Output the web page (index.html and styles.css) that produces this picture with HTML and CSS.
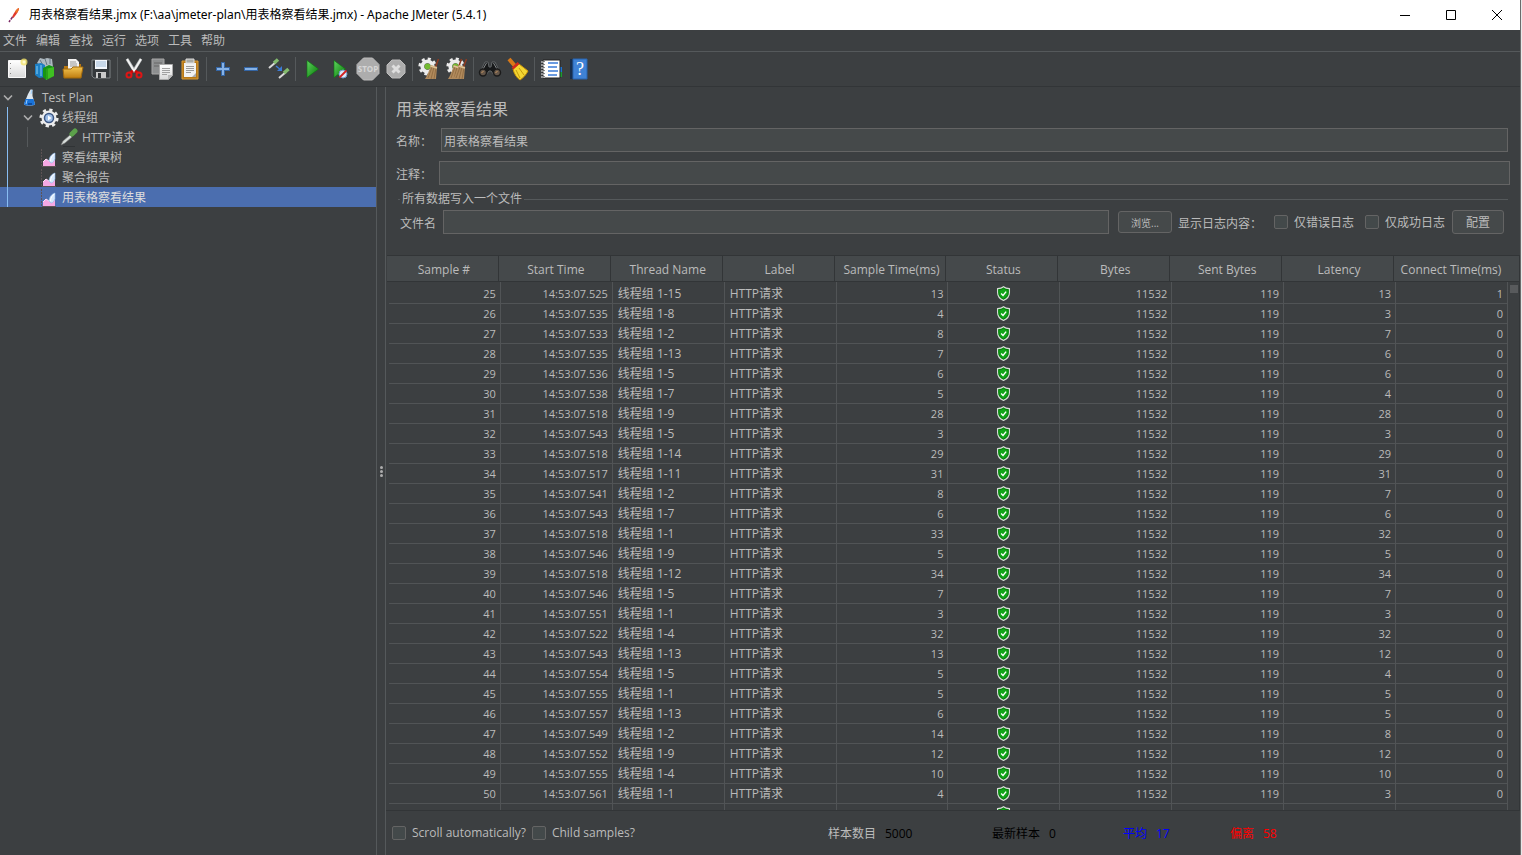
FILE: index.html
```html
<!DOCTYPE html>
<html lang="zh-CN">
<head>
  <meta charset="UTF-8">
  <title>用表格察看结果.jmx - Apache JMeter (5.4.1)</title>
  <link rel="stylesheet" href="styles.css">
</head>
<body>
  <svg class="defs" aria-hidden="true">
    <defs>
      <linearGradient id="gPaper" x1="0" y1="0" x2="0" y2="1"><stop offset="0" stop-color="#fff"/><stop offset="1" stop-color="#d9d9d9"/></linearGradient>
      <linearGradient id="gGreen" x1="0" y1="0" x2="1" y2="1"><stop offset="0" stop-color="#5fd35f"/><stop offset="1" stop-color="#067806"/></linearGradient>
      <linearGradient id="gGold" x1="0" y1="0" x2="0" y2="1"><stop offset="0" stop-color="#f3c552"/><stop offset="1" stop-color="#bf7d10"/></linearGradient>
    </defs>
    <symbol id="shield" viewBox="0 0 16 16">
      <path d="M8 .8C6.500 2.200 4.500 2.800 1.700 2.900V7c0 3.900 2.600 6.900 6.300 8.300 3.700-1.400 6.300-4.400 6.300-8.300V2.900C11.500 2.800 9.500 2.200 8 .8z" fill="#0a9a10" stroke="#d6dad6" stroke-width="1.300"/>
      <path d="M8 2.300C6.700 3.400 5 3.900 3 4V7c0 3 2 5.600 5 6.900 3-1.300 5-3.900 5-6.900V4C11 3.900 9.300 3.400 8 2.300z" fill="#12a418" stroke="#07650b" stroke-width=".6"/>
      <path d="M5.500 8l2 2 3.300-4" fill="none" stroke="#fff" stroke-width="1.500"/>
    </symbol>
    <symbol id="chart" viewBox="0 0 22 20">
      <path d="M3.500 1v17" stroke="#5d5355" stroke-dasharray="2 1"/>
      <path d="M5 18v-4l3-3 3 2 3 1 3-3v7z" fill="#f6a8e4"/>
      <path d="M5 14l3-3 3 2 3 1" fill="none" stroke="#fde3f7"/>
      <path d="M17 5c-4 1-6 5-6 8l2 2c2 0 3-2 4-4z" fill="#d6e8fd" stroke="#8db7ea" stroke-width=".6"/>
      <path d="M16.500 6c-2 1-4 4-4 7" fill="none" stroke="#fff"/>
      <path d="M4 18.500h14" stroke="#5d5355"/>
    </symbol>
    <symbol id="chevron" viewBox="0 0 16 16">
      <path d="M4 5.500l4 4 4-4" fill="none" stroke="#adadad" stroke-width="1.600"/>
    </symbol>
    <symbol id="broom" viewBox="0 0 24 24">
      <path d="M21.500 2l-3 8" stroke="#8f3c22" stroke-width="1.500"/>
      <path d="M14 8l6 2-1 12H8c2-3 4-8 6-14z" fill="#b18a5c"/>
      <path d="M15 10l-4 11M17 10l-3 12M19 11l-2 11" stroke="#8b683f" stroke-width=".8"/>
      <path d="M13.500 9l6.500 2" stroke="#dfc396" stroke-width="1.500"/>
    </symbol>
    <symbol id="cog" viewBox="0 0 24 24">
      <circle cx="12" cy="12" r="9.500" fill="none" stroke="#ececec" stroke-width="4" stroke-dasharray="3.730 3.730"/>
      <circle cx="12" cy="12" r="6.500" fill="none" stroke="#ececec" stroke-width="5"/>
    </symbol>
  </svg>

  <div class="window">
    <header class="titlebar">
      <svg class="app-icon" viewBox="0 0 16 16"><path d="M13 1c-3 1-5 5-7 9l1.500 1C10 8 13 4 13 1z" fill="#e13a2e"/><path d="M13 1c-2 .5-3 2-4 4l2 1c1-2 2-3 2-5z" fill="#ec7427"/><path d="M6.500 10L3 15" stroke="#7c2a66" stroke-width="1.500" stroke-dasharray="3 1"/></svg>
      <h1>用表格察看结果.jmx (F:\aa\jmeter-plan\用表格察看结果.jmx) - Apache JMeter (5.4.1)</h1>
      <div class="window-controls">
        <button aria-label="Minimize"><svg viewBox="0 0 12 12"><path d="M1 6.500h10"/></svg></button>
        <button aria-label="Maximize"><svg viewBox="0 0 12 12"><path d="M1.500 1.500h9v9h-9z"/></svg></button>
        <button aria-label="Close"><svg viewBox="0 0 12 12"><path d="M1 1l10 10M11 1L1 11"/></svg></button>
      </div>
    </header>

    <nav class="menubar">
      <button>文件</button>
      <button>编辑</button>
      <button>查找</button>
      <button>运行</button>
      <button>选项</button>
      <button>工具</button>
      <button>帮助</button>
    </nav>

    <div class="toolbar" role="toolbar">
      <button aria-label="New"><svg viewBox="0 0 24 24"><path d="M3.500 3.500h17v17h-17z" fill="url(#gPaper)" stroke="#f8f8f8"/><path d="M5.500 6v12" stroke="#888" stroke-dasharray="1 4"/><circle cx="19" cy="5" r="3.500" fill="#f3e46b" opacity=".8"/><circle cx="19" cy="5" r="1.500" fill="#fffbd0"/></svg></button>
      <button aria-label="Templates"><svg viewBox="0 0 24 24"><path d="M4 6l3-5 4 1 3-1 5 1 1 8-8 2z" fill="#aeb9c0"/><path d="M7 3l3 5M12 2l2 6M17 2v5" stroke="#687883"/><path d="M2 7l6-1 4 2v12l-6 1-4-3z" fill="#1c7fc4"/><path d="M4 9v8M8 8v11" stroke="#8bd0f4"/><path d="M10 11l6-3 5 2v9l-8 4-3-3z" fill="#179514"/><path d="M13 12l8-2v9l-8 4z" fill="#3fbf22"/><path d="M14 12v10" stroke="#178312"/></svg></button>
      <button aria-label="Open"><svg viewBox="0 0 24 24"><path d="M3 9h5l2-2h10v12H3z" fill="#b87710"/><path d="M7 2h8l3 3v10H7z" fill="#f2f2f2"/><path d="M9 5h6M9 7h7M9 9h7" stroke="#999"/><path d="M2 12h8l2-2h10l-2 11H3z" fill="url(#gGold)" stroke="#a36b0d"/></svg></button>
      <button aria-label="Save"><svg viewBox="0 0 24 24"><path d="M3 3h18v18H5l-2-2z" fill="#34383b" stroke="#7d8184"/><path d="M6 3h12v9H6z" fill="#f2f6fb"/><path d="M7 5h10M7 7h10M7 9h10" stroke="#9cb9d6"/><path d="M7 15h10v6H7z" fill="#c9c9c9"/><path d="M9 16h3v5H9z" fill="#303336"/></svg></button>
      <span class="separator"></span>
      <button aria-label="Cut"><svg viewBox="0 0 24 24"><path d="M5 2l8 13M19 2l-8 13" stroke="#b9bdbf" stroke-width="3"/><path d="M5 2l7 12M19 2l-7 12" stroke="#f5f5f5" stroke-width="1.500"/><path d="M11 14l-3 2M13 14l3 2" stroke="#c80a0a" stroke-width="3"/><circle cx="7" cy="18" r="2.500" fill="none" stroke="#df1515" stroke-width="2"/><circle cx="17" cy="18" r="2.500" fill="none" stroke="#df1515" stroke-width="2"/></svg></button>
      <button aria-label="Copy"><svg viewBox="0 0 24 24"><path d="M2 2h12v15H2z" fill="#8d8f90" stroke="#a8a8a8"/><path d="M4 6h8M4 9h5" stroke="#666"/><path d="M9.500 7.500h13v11l-4 4h-9z" fill="url(#gPaper)" stroke="#aaa"/><path d="M12 11.500h8M12 13.500h8M12 15.500h8M12 17.500h5" stroke="#a1a1a1"/><path d="M22 18v1l-3 3h-1v-4z" fill="#bbb"/></svg></button>
      <button aria-label="Paste"><svg viewBox="0 0 24 24"><path d="M4 4h16v18H4z" fill="#b87816" stroke="#d69a37"/><path d="M6 6h12v14H6z" fill="#f1f1f1"/><path d="M8 2h8v4H8z" fill="#a9aaa5" stroke="#ddd"/><path d="M8 9.500h8M8 11.500h8M8 13.500h8M8 15.500h5" stroke="#999"/><path d="M18 16v4h-4z" fill="#aaa"/></svg></button>
      <span class="separator"></span>
      <button aria-label="Expand All"><svg viewBox="0 0 24 24"><path d="M12 5v14M5 12h14" stroke="#3465a4" stroke-width="4"/><path d="M12 6v12M6 12h12" stroke="#86b2e6" stroke-width="2"/></svg></button>
      <button aria-label="Collapse All"><svg viewBox="0 0 24 24"><path d="M5 12h14" stroke="#3465a4" stroke-width="4"/><path d="M6 12h12" stroke="#86b2e6" stroke-width="2"/></svg></button>
      <button aria-label="Toggle"><svg viewBox="0 0 24 24"><path d="M2 11l7-6M12 21l7-6" stroke="#d9d9d9" stroke-width="2"/><path d="M7 6l4-3.500M17 16l4.500-4" stroke="#83bb6e" stroke-width="3.500"/><path d="M9 9l5 4" stroke="#3c7bd6" stroke-width="1.500"/><path d="M15 9v5h-5z" fill="#3c7bd6"/></svg></button>
      <span class="separator"></span>
      <button aria-label="Start"><svg viewBox="0 0 24 24"><path d="M7 3.500L18.500 12 7 20.500z" fill="url(#gGreen)" stroke="#087a0c" stroke-width=".6"/></svg></button>
      <button aria-label="Start no pauses"><svg viewBox="0 0 24 24"><path d="M6 3.500L17.500 12 6 20.500z" fill="url(#gGreen)" stroke="#087a0c" stroke-width=".6"/><circle cx="15" cy="17" r="4" fill="#dbe9f8" stroke="#719bc9"/><path d="M11.500 20.500l7-7" stroke="#d42222" stroke-width="1.800"/></svg></button>
      <button aria-label="Stop" disabled><svg viewBox="0 0 24 24"><path d="M7.500 1h9L23 7.500v9L16.500 23h-9L1 16.500v-9z" fill="#adadad" stroke="#bcbcbc"/><text x="12" y="15" class="stop-text">STOP</text></svg></button>
      <button aria-label="Shutdown" disabled><svg viewBox="0 0 24 24"><path d="M8 3h8l5 5v8l-5 5H8l-5-5V8z" fill="#adadad" stroke="#bcbcbc"/><path d="M8.500 8.500l7 7M15.500 8.500l-7 7" stroke="#dedede" stroke-width="3"/></svg></button>
      <span class="separator"></span>
      <button aria-label="Clear"><svg viewBox="0 0 24 24"><use href="#cog" x="1" y="0" width="19" height="19"/><circle cx="10.500" cy="9.500" r="3" fill="#74bb32"/><use href="#broom" width="24" height="24"/></svg></button>
      <button aria-label="Clear All"><svg viewBox="0 0 24 24"><use href="#cog" x="1" y="0" width="19" height="19"/><circle cx="10.500" cy="9.500" r="3" fill="#74bb32"/><use href="#broom" x="-5" width="24" height="24"/><use href="#broom" width="24" height="24"/></svg></button>
      <span class="separator"></span>
      <button aria-label="Search"><svg viewBox="0 0 24 24"><path d="M7 5h3l1 5h2l1-5h3l5 10-6 3-3-4h-2l-3 4-6-3z" fill="#17191a" stroke="#606466"/><path d="M8.500 6l-4 7M15.500 6l4 7" stroke="#85898b"/><circle cx="5" cy="15.500" r="3.500" fill="#66574a" stroke="#1b1b1b" stroke-width="1.500"/><circle cx="19" cy="15.500" r="3.500" fill="#66574a" stroke="#1b1b1b" stroke-width="1.500"/><path d="M3.500 16l2-2M17.500 16l2-2" stroke="#c79660"/></svg></button>
      <button aria-label="Reset Search"><svg viewBox="0 0 24 24"><path d="M3 2l6 7" stroke="#d87919" stroke-width="4"/><path d="M7 12l6-5 9 7c-2 4-5 7-8 9-3-2-6-6-7-11z" fill="#f4d632" stroke="#c99408"/><path d="M10 13l4 8M13 11l5 7" stroke="#c59a0c"/><path d="M6.500 11.500L12.500 6" stroke="#d12a1d" stroke-width="2.500"/></svg></button>
      <span class="separator"></span>
      <button aria-label="Function Helper"><svg viewBox="0 0 24 24"><path d="M19 10h4v5h-4z" fill="#1b71d3"/><path d="M19 15h4v5h-4z" fill="#1b9c30"/><path d="M4 3h17v18H4z" fill="#fff" stroke="#222"/><path d="M9 6h10M9 10h9M9 14h10M9 18h9" stroke="#3b7bd6" stroke-width="1.500"/><path d="M2 5h4M2 8h4M2 11h4M2 14h4M2 17h4M2 20h4" stroke="#f0f0f0"/><path d="M5 4v17" stroke="#222" stroke-dasharray="1 2"/></svg></button>
      <button aria-label="Help"><svg viewBox="0 0 24 24"><path d="M3 2h4v20H3z" fill="#172e4c"/><path d="M6 2h14v20H6z" fill="#3f82d5" stroke="#2865b0"/><text x="13" y="18" class="help-text">?</text></svg></button>
    </div>

    <div class="workspace">
      <aside class="sidebar">
        <ul class="tree" role="tree">
          <li role="treeitem">
            <div class="node"><svg class="twisty"><use href="#chevron"/></svg><svg class="node-icon" viewBox="0 0 22 20"><path d="M10 6l2.500-4.500h2V8l2.500 8c0 2-11 2-11 0z" fill="#dce6ee"/><path d="M7.500 11h8l1.500 5c0 2-11 2-11 0z" fill="#1872d8"/><path d="M9 12l-1 4M13 6l1-4" stroke="#9fd0ff"/><path d="M10 16h4" stroke="#0b3f8a" stroke-width="1.500"/></svg>Test Plan</div>
            <ul class="branch active" role="group">
              <li role="treeitem">
                <div class="node"><svg class="twisty"><use href="#chevron"/></svg><svg class="node-icon" viewBox="0 0 22 20"><use href="#cog" x="1" y="0" width="20" height="20"/><circle cx="11" cy="10" r="4.500" fill="#9fbfe8" stroke="#3b5684" stroke-width="1.500"/><path d="M10 7.500l3.500 2.500-3.500 2.500z" fill="#fff"/></svg>线程组</div>
                <ul class="branch" role="group">
                  <li role="treeitem"><div class="node"><span class="twisty"></span><svg class="node-icon" viewBox="0 0 22 20"><path d="M3 17l2-4 7-6 2 2-7 6z" fill="#d8dedb" stroke="#777" stroke-width=".6"/><path d="M12 4l4 4" stroke="#2e4b2e" stroke-width="2"/><path d="M14 6l3-3" stroke="#5ca14b" stroke-width="5" stroke-linecap="round"/><path d="M5 18.500h12" stroke="#303335"/></svg>HTTP请求</div></li>
                </ul>
              </li>
              <li role="treeitem"><div class="node"><span class="twisty"></span><svg class="node-icon"><use href="#chart"/></svg>察看结果树</div></li>
              <li role="treeitem"><div class="node"><span class="twisty"></span><svg class="node-icon"><use href="#chart"/></svg>聚合报告</div></li>
              <li role="treeitem" aria-selected="true"><div class="node selected"><span class="twisty"></span><svg class="node-icon"><use href="#chart"/></svg>用表格察看结果</div></li>
            </ul>
          </li>
        </ul>
      </aside>
      <div class="splitter"><i></i><i></i><i></i></div>

      <main class="panel">
        <form class="config">
          <h2>用表格察看结果</h2>
          <div class="field-row name-row">
            <label for="name">名称：</label>
            <input type="text" id="name" value="用表格察看结果">
          </div>
          <div class="field-row comment-row">
            <label for="comment">注释：</label>
            <input type="text" id="comment">
          </div>
          <fieldset>
            <legend>所有数据写入一个文件</legend>
            <div class="file-row">
              <label for="filename">文件名</label>
              <input type="text" id="filename">
              <button type="button" class="btn browse">浏览...</button>
              <span class="log-label">显示日志内容：</span>
              <label class="check"><input type="checkbox"><span>仅错误日志</span></label>
              <label class="check"><input type="checkbox"><span>仅成功日志</span></label>
              <button type="button" class="btn">配置</button>
            </div>
          </fieldset>
        </form>

        <div class="results">
          <table>
            <thead>
              <tr>
                <th>Sample #</th>
                <th>Start Time</th>
                <th>Thread Name</th>
                <th>Label</th>
                <th>Sample Time(ms)</th>
                <th>Status</th>
                <th>Bytes</th>
                <th>Sent Bytes</th>
                <th>Latency</th>
                <th>Connect Time(ms)</th>
              </tr>
            </thead>
            <tbody id="samples"></tbody>
          </table>
          <span class="scroll-thumb"></span>
        </div>

        <footer class="summary">
          <label class="check"><input type="checkbox">Scroll automatically?</label>
          <label class="check"><input type="checkbox">Child samples?</label>
          <div class="stats">
            <div class="stat total"><span>样本数目</span><output>5000</output></div>
            <div class="stat latest"><span>最新样本</span><output>0</output></div>
            <div class="stat average"><span>平均</span><output>17</output></div>
            <div class="stat deviation"><span>偏离</span><output>58</output></div>
          </div>
        </footer>
      </main>
    </div>
  </div>

  <script src="script.js"></script>
</body>
</html>
```

FILE: styles.css
```css
:root {
  --bg: #3c3f41;
  --field: #45494a;
  --border: #646464;
  --line: #515456;
  --dark-line: #323537;
  --text: #bbbbbb;
}

* {
  box-sizing: border-box;
}

body {
  margin: 0;
  padding-right: 1px;
  background: #e8e8e8;
  color: var(--text);
  font: 12px/20px "Open Sans", "Noto Sans CJK SC", sans-serif;
}

button,
input {
  font: inherit;
  color: inherit;
}

button {
  padding: 0;
  border: none;
  background: none;
}

.defs {
  position: absolute;
  width: 0;
  height: 0;
}

.window {
  display: flex;
  flex-direction: column;
  height: 100vh;
  background: var(--bg);
  border-right: 1px solid #6b6b6b;
}

/* title bar */
.titlebar {
  display: flex;
  flex: none;
  align-items: center;
  height: 30px;
  padding-left: 6px;
  background: #fff;
  color: #000;
}

.app-icon {
  width: 16px;
  height: 16px;
  margin-right: 7px;
}

.titlebar h1 {
  flex: 1;
  margin: 0;
  font-family: "Noto Sans", "Noto Sans CJK SC", sans-serif;
  font-size: 12px;
  font-weight: normal;
}

.window-controls {
  display: flex;
}

.window-controls button {
  display: flex;
  align-items: center;
  justify-content: center;
  width: 46px;
  height: 30px;
}

.window-controls svg {
  width: 12px;
  height: 12px;
  fill: none;
  stroke: #000;
}

/* menu and toolbar */
.menubar {
  display: flex;
  flex: none;
  gap: 9px;
  height: 22px;
  padding: 1px 0 0 3px;
  border-bottom: 1px solid #55595b;
}

.toolbar {
  display: flex;
  flex: none;
  height: 35px;
  padding-left: 3px;
  border-bottom: 1px solid var(--dark-line);
}

.toolbar button {
  display: flex;
  align-items: center;
  justify-content: center;
  width: 28px;
}

.toolbar svg {
  width: 24px;
  height: 24px;
  fill: none;
}

.separator {
  width: 1px;
  margin: 5px 2px;
  background: #55595b;
}

.stop-text {
  fill: #d6d6d6;
  font-size: 8px;
  font-weight: bold;
  text-anchor: middle;
}

.help-text {
  fill: #fff;
  font: 18px "Liberation Serif", serif;
  text-anchor: middle;
}

/* tree */
.workspace {
  display: flex;
  flex: 1;
  min-height: 0;
}

.sidebar {
  flex: none;
  width: 377px;
  border-right: 1px solid #55595b;
}

.tree,
.branch {
  margin: 0;
  padding: 0;
  list-style: none;
}

.branch {
  position: relative;
}

.branch::before {
  content: "";
  position: absolute;
  top: 0;
  bottom: 0;
  left: 27px;
  width: 1px;
  background: #55595b;
}

.branch.active::before {
  left: 7px;
  background: #88bdf2;
}

.node {
  display: flex;
  align-items: center;
  height: 20px;
  padding-top: 2px;
}

.branch .node {
  padding-left: 20px;
}

.branch .branch .node {
  padding-left: 40px;
}

.node.selected {
  background: #4b6eaf;
  color: #dddddd;
}

.twisty {
  width: 16px;
  height: 16px;
  margin-right: 2px;
}

.node-icon {
  width: 22px;
  height: 20px;
  margin-right: 2px;
}

.splitter {
  display: flex;
  flex: none;
  flex-direction: column;
  align-items: center;
  justify-content: center;
  gap: 1px;
  width: 9px;
  border-right: 1px solid #55595b;
}

.splitter i {
  width: 3px;
  height: 3px;
  border-radius: 50%;
  background: #adadad;
}

/* listener settings */
.panel {
  display: flex;
  flex: 1;
  flex-direction: column;
  min-width: 0;
}

.config {
  padding: 11px 10px 21px;
}

.config h2 {
  margin: 0 0 8px;
  font-size: 16px;
  font-weight: normal;
  line-height: 22px;
}

input[type="text"] {
  flex: 1;
  min-width: 0;
  height: 24px;
  padding: 2px 2px 0;
  border: 1px solid var(--border);
  background: var(--field);
}

.field-row {
  display: flex;
  align-items: center;
}

.field-row label,
.file-row > label,
.log-label {
  padding-top: 3px;
  white-space: nowrap;
}

.field-row label {
  width: 43px;
}

.name-row {
  margin-bottom: 9px;
  padding-right: 2px;
}

.name-row label {
  width: 45px;
}

fieldset {
  min-width: 0;
  margin: 5px 2px 0;
  padding: 2px 4px 0 2px;
  border: none;
  border-top: 1px solid #55595b;
}

legend {
  padding: 0 2px;
  line-height: 18px;
}

.file-row {
  display: flex;
  align-items: center;
  height: 24px;
}

.file-row input[type="text"] {
  margin: 0 9px 0 7px;
}

.btn {
  width: 52px;
  height: 24px;
  padding-top: 2px;
  border: 1px solid var(--border);
  border-radius: 3px;
  background: var(--field);
}

.btn.browse {
  width: 54px;
  height: 22px;
  font-size: 10px;
  line-height: 18px;
}

.log-label {
  margin: 0 12px 0 6px;
}

.check {
  display: flex;
  align-items: center;
  white-space: nowrap;
}

.check input {
  appearance: none;
  width: 14px;
  height: 14px;
  margin: 0 6px 0 0;
  border: 1px solid var(--border);
  border-radius: 2px;
  background: #43494a;
}

.file-row > .check {
  margin-right: 7px;
  padding-top: 0;
}

.file-row .check + .check {
  margin-left: 4px;
}

.file-row .check span {
  padding-top: 2px;
}

/* results table */
.results {
  position: relative;
  flex: 1;
  min-height: 0;
  margin-left: 1px;
  padding: 0 11px 0 2px;
  overflow: hidden;
  border: solid var(--dark-line);
  border-width: 1px 1px 0 0;
  background: linear-gradient(#45494b 25px, var(--dark-line) 25px) no-repeat 0 0 / 100% 26px;
}

table {
  width: 100%;
  table-layout: fixed;
  border-spacing: 0;
}

th {
  height: 26px;
  padding: 2px 2px 0 0;
  font-weight: normal;
  white-space: nowrap;
  background: linear-gradient(var(--dark-line), var(--dark-line)) no-repeat right 2px top / 1px 100%;
}

th:last-child {
  background: none;
}

td {
  height: 20px;
  padding: 0 4px;
  border: solid var(--line);
  border-width: 0 1px 1px 0;
  font-size: 11px;
  line-height: 19px;
  text-align: right;
  white-space: nowrap;
}

tbody tr:first-child td {
  height: 22px;
  padding-top: 2px;
}

td.text {
  padding-left: 5px;
  font-size: 12px;
  text-align: left;
}

td svg {
  display: block;
  width: 15px;
  height: 15px;
  margin: 0 auto;
}

.scroll-thumb {
  position: absolute;
  top: 29px;
  right: 1px;
  width: 8px;
  height: 8px;
  background: #585a5c;
}

/* bottom bar */
.summary {
  display: flex;
  flex: none;
  align-items: center;
  gap: 6px;
  height: 45px;
  padding-left: 6px;
  border-top: 1px solid var(--dark-line);
}

.stats {
  display: flex;
  flex: 1;
  justify-content: center;
  gap: 10px;
  padding: 2px 6px 0 0;
}

.stat {
  display: flex;
  gap: 9px;
  color: #000;
}

.stat output {
  width: 64px;
}

.total output {
  width: 97px;
}

.total span {
  color: var(--text);
}

.average {
  color: #0000ff;
}

.deviation {
  color: #ff0000;
}
```

FILE: script.js
```js
// sample, start time, thread, sample time, latency, connect time
const samples = [
  [25, '07.525', '1-15', 13, 13, 1],
  [26, '07.535', '1-8', 4, 3, 0],
  [27, '07.533', '1-2', 8, 7, 0],
  [28, '07.535', '1-13', 7, 6, 0],
  [29, '07.536', '1-5', 6, 6, 0],
  [30, '07.538', '1-7', 5, 4, 0],
  [31, '07.518', '1-9', 28, 28, 0],
  [32, '07.543', '1-5', 3, 3, 0],
  [33, '07.518', '1-14', 29, 29, 0],
  [34, '07.517', '1-11', 31, 31, 0],
  [35, '07.541', '1-2', 8, 7, 0],
  [36, '07.543', '1-7', 6, 6, 0],
  [37, '07.518', '1-1', 33, 32, 0],
  [38, '07.546', '1-9', 5, 5, 0],
  [39, '07.518', '1-12', 34, 34, 0],
  [40, '07.546', '1-5', 7, 7, 0],
  [41, '07.551', '1-1', 3, 3, 0],
  [42, '07.522', '1-4', 32, 32, 0],
  [43, '07.543', '1-13', 13, 12, 0],
  [44, '07.554', '1-5', 5, 4, 0],
  [45, '07.555', '1-1', 5, 5, 0],
  [46, '07.557', '1-13', 6, 5, 0],
  [47, '07.549', '1-2', 14, 8, 0],
  [48, '07.552', '1-9', 12, 12, 0],
  [49, '07.555', '1-4', 10, 10, 0],
  [50, '07.561', '1-1', 4, 3, 0]
];

const shield = '<td class="status"><svg role="img" aria-label="success"><use href="#shield"/></svg></td>';

const rows = samples.map(([id, time, thread, elapsed, latency, connect]) => `
  <tr>
    <td>${id}</td>
    <td>14:53:${time}</td>
    <td class="text">线程组 ${thread}</td>
    <td class="text">HTTP请求</td>
    <td>${elapsed}</td>
    ${shield}
    <td>11532</td>
    <td>119</td>
    <td>${latency}</td>
    <td>${connect}</td>
  </tr>`);

// the next row only peeks in at the bottom edge
rows.push('<tr>' + '<td></td>'.repeat(5) + shield + '<td></td>'.repeat(4) + '</tr>');

document.getElementById('samples').innerHTML = rows.join('');
```
